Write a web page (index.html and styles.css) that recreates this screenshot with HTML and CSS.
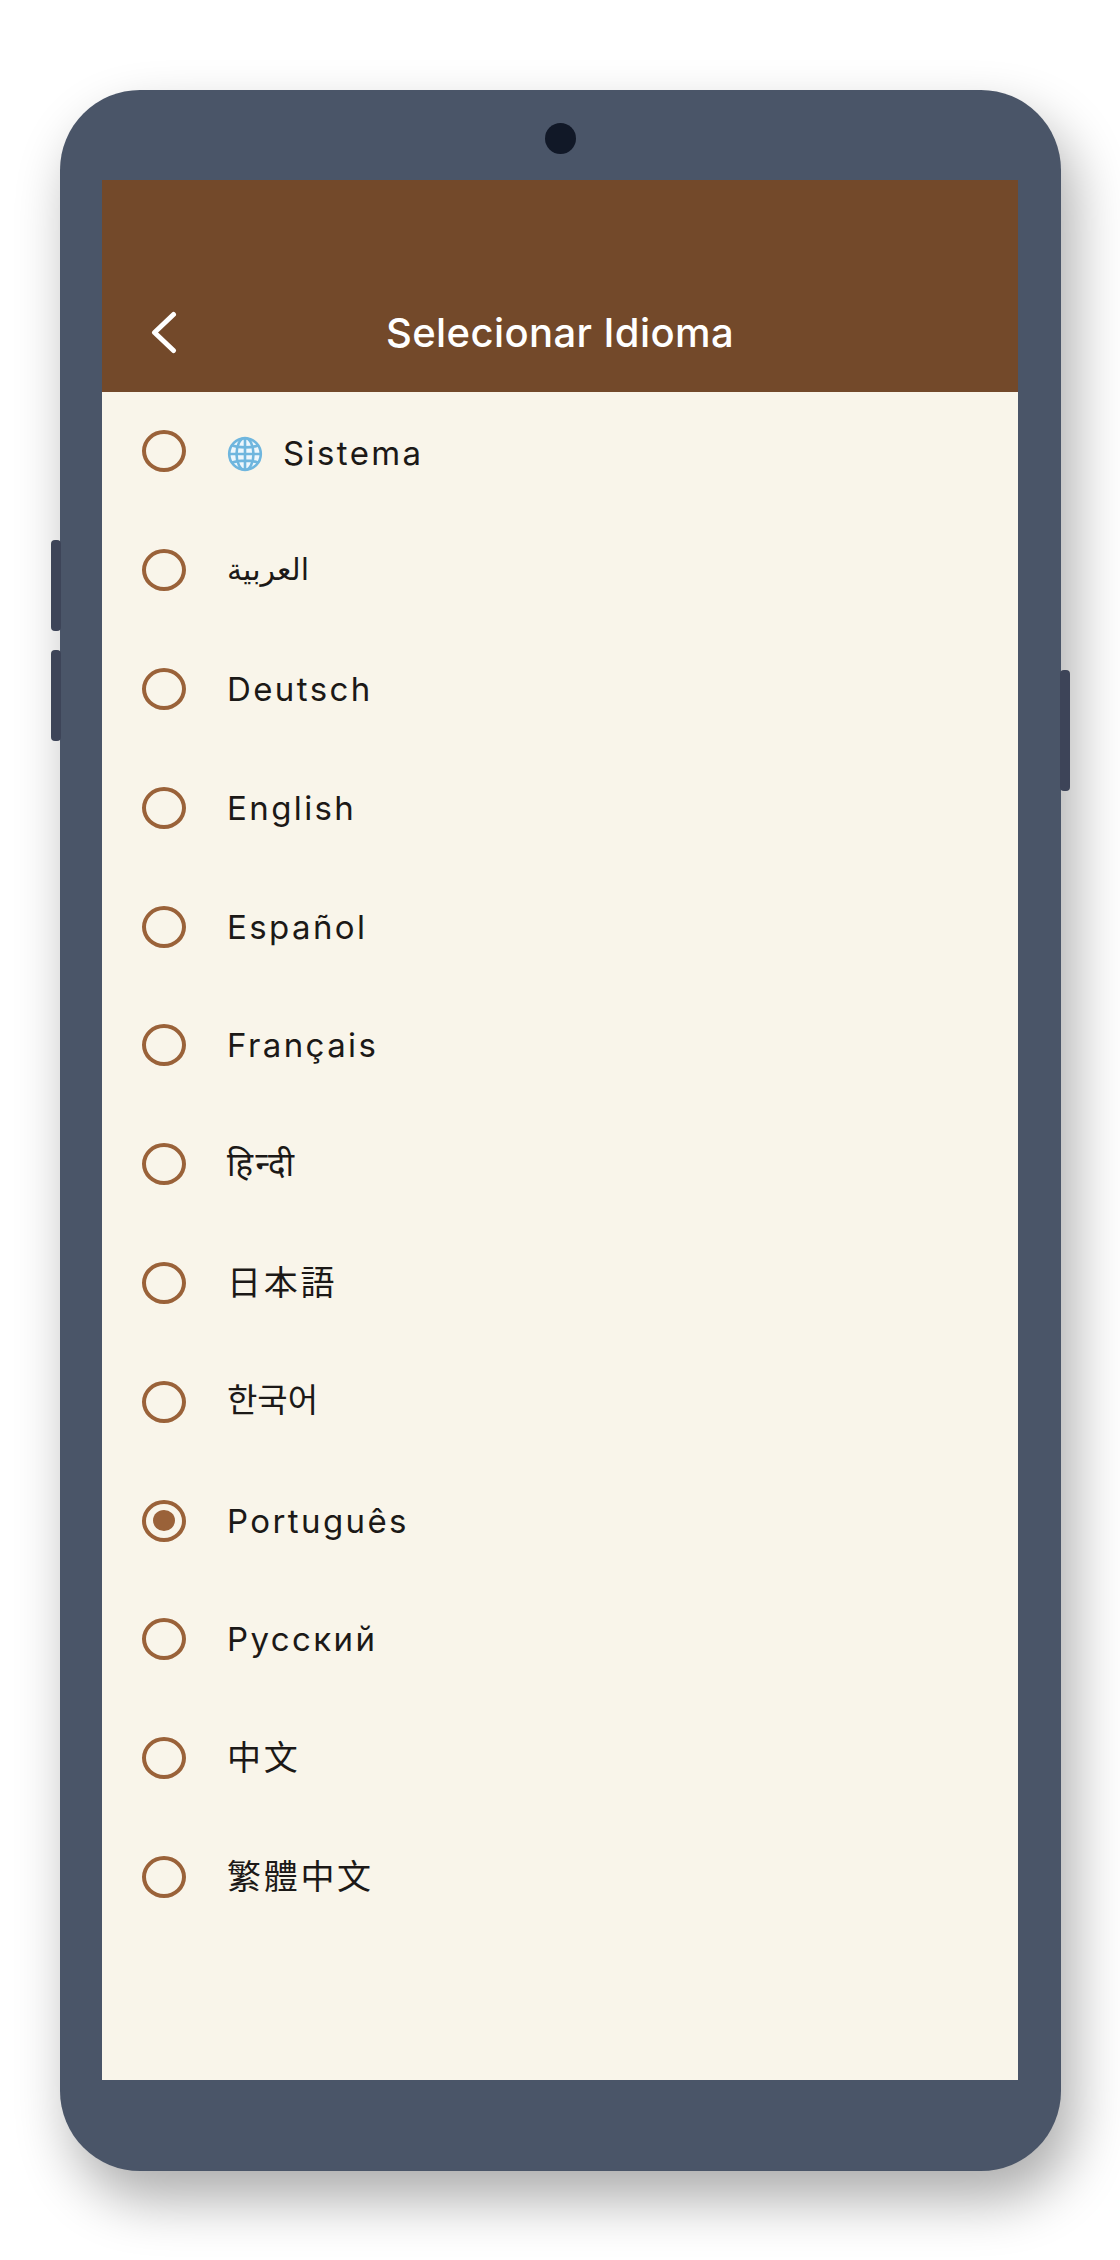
FILE: index.html
```html
<!DOCTYPE html>
<html lang="pt">
<head>
    <meta charset="UTF-8">
    <title>Selecionar Idioma</title>
    <link rel="stylesheet" href="styles.css">
</head>
<body>
    <div class="phone">
        <span class="side-btn vol-up"></span>
        <span class="side-btn vol-down"></span>
        <span class="side-btn power"></span>
        <div class="bezel-top"><span class="camera"></span></div>
        <div class="screen">
            <header class="app-bar">
                <svg class="back" width="28" height="44" viewBox="0 0 28 44">
                    <path d="M23.5 4.5 L4.5 22.5 L23.5 40.5" fill="none" stroke="#fff" stroke-width="5" stroke-linecap="round" stroke-linejoin="round"/>
                </svg>
                <h1 class="title">Selecionar Idioma</h1>
            </header>
            <ul class="lang-list">
                <li class="lang"><span class="radio"></span>
                    <svg class="globe" width="36" height="36" viewBox="0 0 36 36">
                        <circle cx="18" cy="18" r="16" fill="#eef7fc"/>
                        <g fill="none" stroke="#6fb6de" stroke-width="2.6">
                            <circle cx="18" cy="18" r="15.8"/>
                            <ellipse cx="18" cy="18" rx="8.5" ry="16"/>
                            <path d="M18 2V34M2.5 18H33.5M5 9.5C12 12 24 12 31 9.5M5 26.5C12 24 24 24 31 26.5"/>
                        </g>
                    </svg>
                    <span class="name system">Sistema</span></li>
                <li class="lang"><span class="radio"></span><span class="name arabic">العربية</span></li>
                <li class="lang"><span class="radio"></span><span class="name">Deutsch</span></li>
                <li class="lang"><span class="radio"></span><span class="name">English</span></li>
                <li class="lang"><span class="radio"></span><span class="name">Español</span></li>
                <li class="lang"><span class="radio"></span><span class="name">Français</span></li>
                <li class="lang"><span class="radio"></span><span class="name">हिन्दी</span></li>
                <li class="lang"><span class="radio"></span><span class="name cjk" lang="ja">日本語</span></li>
                <li class="lang"><span class="radio"></span><span class="name korean" lang="ko">한국어</span></li>
                <li class="lang"><span class="radio checked"></span><span class="name">Português</span></li>
                <li class="lang"><span class="radio"></span><span class="name">Русский</span></li>
                <li class="lang"><span class="radio"></span><span class="name cjk" lang="zh-CN">中文</span></li>
                <li class="lang"><span class="radio"></span><span class="name cjk" lang="zh-TW">繁體中文</span></li>
            </ul>
        </div>
    </div>
</body>
</html>
```

FILE: styles.css
```css
html {
    background: #fff;
}

body {
    box-sizing: border-box;
    height: 2260px;
    margin: 0;
    padding: 90px 0 0 60px;
    overflow: hidden;
    font-family: Inter, "Noto Sans", "DejaVu Sans", "Noto Sans CJK JP", sans-serif;
}

.phone {
    position: relative;
    box-sizing: border-box;
    width: 1001px;
    height: 2081px;
    padding: 0 43px 91px 42px;
    background: #4a5568;
    border-radius: 80px;
    box-shadow: 12px 28px 55px rgba(0, 0, 0, 0.33);
}

.side-btn {
    position: absolute;
    width: 10px;
    background: #3d4458;
    border-radius: 4px;
}

.vol-up {
    left: -9px;
    top: 450px;
    height: 91px;
}

.vol-down {
    left: -9px;
    top: 560px;
    height: 91px;
}

.power {
    right: -9px;
    top: 580px;
    height: 121px;
}

.bezel-top {
    display: flex;
    align-items: center;
    justify-content: center;
    height: 90px;
}

.camera {
    width: 31px;
    height: 31px;
    margin-top: 7px;
    background: #111827;
    border-radius: 50%;
}

.screen {
    height: 1900px;
    background: #f9f5ea;
}

.app-bar {
    position: relative;
    display: flex;
    align-items: flex-end;
    justify-content: center;
    box-sizing: border-box;
    height: 212px;
    padding-bottom: 37px;
    background: #73492a;
}

.back {
    position: absolute;
    left: 48px;
    bottom: 38px;
}

.title {
    margin: 0;
    font-size: 40px;
    line-height: 44px;
    font-weight: 500;
    letter-spacing: 0.4px;
    color: #fff;
}

.lang-list {
    margin: 0;
    padding: 0;
    list-style: none;
}

.lang {
    display: flex;
    align-items: center;
    height: 118.8px;
    padding-left: 40px;
}

.radio {
    display: flex;
    align-items: center;
    justify-content: center;
    box-sizing: border-box;
    width: 44px;
    height: 42px;
    margin-right: 41px;
    border: 4.5px solid #9a6239;
    border-radius: 50%;
}

.radio.checked::after {
    content: "";
    width: 22px;
    height: 21px;
    background: #9a6239;
    border-radius: 50%;
}

.globe {
    margin: 5px 20px 0 0;
}

.name {
    font-size: 33px;
    line-height: 44px;
    letter-spacing: 2.4px;
    color: #1c1917;
}

.system {
    margin-top: 3px;
}

.arabic {
    font-size: 30px;
    letter-spacing: 0;
    margin-top: -3px;
}

.korean {
    letter-spacing: 0;
    margin-top: -3px;
}

.cjk {
    font-size: 34px;
    letter-spacing: 2.7px;
}
```
